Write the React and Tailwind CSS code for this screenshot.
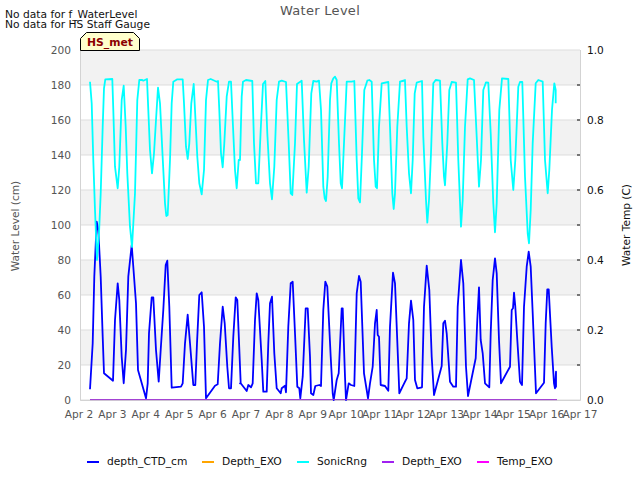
const map = (ox, oy, pts) => {
  const out = [];
  for (let i = 0; i < pts.length; i += 2) out.push(`${(ox + pts[i] / 3).toFixed(1)},${(oy + pts[i + 1] / 3).toFixed(1)}`);
  return out;
};

const sonic = [
  ...map(80, 60, [30,65,35,130,40,300,45,450,51,600,57,520,62,400,68,200,72,85,76,58,97,57,100,150,105,320,113,385,118,320,125,120,131,77,137,200,142,340,150,500,156,561,165,400,172,120,178,60,187,60,190,62,201,57,205,150,210,270,216,340,222,280,228,180,234,83,240,130,247,270,255,430,259,468,263,465,270,300,275,130,280,65,292,58,308,58,312,130,318,260,323,297,328,250,334,130,341,72,345,150,352,290,358,370,365,403,372,330,378,120,384,60,392,57,410,65,414,63,418,150,423,280,428,322,433,250,440,110,447,65,453,65,458,180,465,330,470,385,476,300]),
  ...map(240, 60, [0,300,5,110,9,65,18,60,37,63,42,250,48,370,55,370,62,210,69,72,76,63,82,220,90,370,96,418,103,320,110,120,117,65,125,62,138,66,146,250,152,400,157,405,165,250,171,72,185,62,192,240,200,398,206,320,214,100,220,63,230,65,237,62,243,150,250,380,254,415,258,423,263,350,270,120,274,70,280,55,285,50,290,60,297,250,302,370,306,385,312,250,320,65,335,65,343,63,350,300,355,415,360,427,366,280,373,90,382,62,388,60,395,65,402,300,407,380,411,385,417,200,425,70,445,66,450,200,457,400,461,447,465,400,472,200,480,65,495,60]),
  ...map(400, 60, [0,65,15,62,20,200,27,340,33,400,38,300,44,100,50,68,66,63,70,230,78,420,82,488,87,420,93,280,100,70,107,60,120,62,127,250,132,350,135,376,142,250,148,90,155,66,168,68,175,300,183,500,188,420,195,200,203,58,210,55,222,60,230,230,237,380,243,300,250,90,258,67,265,68,272,220,280,430,285,517,290,430,298,150,306,55,325,57,332,300,340,390,346,300,355,80,360,66,367,66,375,350,383,520,387,550,392,450,398,250,407,70,415,60,428,65,435,300,443,400,448,330,456,150,463,70,467,90,467,130]),
].join(" ");

const depth = [
  ...map(80, 210, [30,538,38,400,43,200,50,35,55,60,62,200,68,380,72,490,99,512,105,330,113,220,118,270,125,440,131,520,138,420,145,200,155,105,160,170,168,280,174,480,198,565,203,520,207,370,215,262,220,262,228,420,236,515,242,420,250,300,257,165,262,152,268,290,275,533,303,530,308,520,315,400,323,314,330,400,340,525,346,525,351,400,358,255,365,247,372,350,378,565,405,527,413,523,420,400,428,290,434,340,442,470,447,535,453,535,460,380,467,262,472,270,482,520]),
  ...map(240, 260, [0,370,2,370,20,393,25,375,33,382,38,370,45,180,50,100,55,120,65,300,70,395,80,395,85,250,90,130,96,110,103,280,110,385,122,400,125,385,135,377,138,397,145,200,152,70,158,65,165,220,172,380,178,385,181,415,188,350,197,145,203,145,210,290,213,400,220,405,226,378,238,375,243,378,250,150,256,65,262,80,272,290,278,400,281,420,290,360,296,340,305,145,308,145,315,350,318,420,326,370,333,375,343,378,350,100,357,48,362,65,372,340,380,390,384,415,390,370,398,320,405,190,410,150,413,225,417,230,422,375,435,378,445,392,450,200,459,38,465,70,475,320,478,400,495,365,500,355]),
  ...map(400, 240, [0,455,20,415,27,250,33,182,40,240,45,420,52,445,66,442,72,200,80,77,88,150,95,350,102,465,125,378,130,250,135,242,140,280,150,425,160,440,168,440,173,200,183,60,190,130,198,380,204,468,227,355,232,240,237,142,242,300,248,340,255,430,268,442,272,280,278,120,285,55,290,100,297,300,303,430,330,380,335,210,339,205,342,158,346,200,352,300,360,425,366,435,372,200,380,80,386,35,392,80,398,220,408,460,432,428,437,250,442,148,446,148,455,320,462,430,465,445,468,395,468,440,464,445]),
].join(" ");

const yTicks = [0, 20, 40, 60, 80, 100, 120, 140, 160, 180, 200];
const bands = [180, 140, 100, 60, 20];
const days = [2, 3, 4, 5, 6, 7, 8, 9, 10, 11, 12, 13, 14, 15, 16, 17];
const rightTicks = [0.1, 0.2, 0.3, 0.4, 0.5, 0.6, 0.7, 0.8, 0.9];
const rightLabels = ["0.0", "0.2", "0.4", "0.6", "0.8", "1.0"];
const legend = [
  ["depth_CTD_cm", "bg-[#0000ff]", "w-[79px]"],
  ["Depth_EXO", "bg-[#ffa500]", "w-[59px]"],
  ["SonicRng", "bg-[#00ffff]", "w-[49px]"],
  ["Depth_EXO", "bg-[#a020f0]", "w-[59px]"],
  ["Temp_EXO", "bg-[#ff00ff]", "w-[55px]"],
];

export default function App() {
  return (
    <div className="w-[640px] h-[480px] bg-white flex flex-col overflow-hidden font-['DejaVu_Sans',sans-serif]">
      <div className="h-[32px] grid grid-cols-[1fr_auto_1fr] shrink-0">
        <div className="pl-[5px] pt-[10px] text-[10.7px] leading-[10px] text-[#111] whitespace-nowrap">
          <div>No data for f_WaterLevel</div>
          <div>No data for HS Staff Gauge</div>
        </div>
        <div className="pt-[3px] text-[13px] leading-[16px] text-[#555] tracking-[0.3px]">Water Level</div>
        <div />
      </div>

      <svg className="block shrink-0" width="640" height="413" viewBox="0 32 640 413">
        <rect x="80" y="50" width="500" height="350" fill="#ffffff" />
        {bands.map((v) => (
          <rect key={v} x="80" y={400 - (v + 20) * 1.75} width="500" height="35" fill="#f2f2f2" />
        ))}
        {yTicks.map((v) => (
          <line key={v} x1="80" x2="580" y1={400 - v * 1.75} y2={400 - v * 1.75} stroke="#dddddd" strokeWidth="1" />
        ))}
        <path d="M80.5 50V400.5H580.5V50" fill="none" stroke="#d3d3d3" strokeWidth="1" />

        <polyline points={depth} fill="none" stroke="#0000ff" strokeWidth="1.8" strokeLinejoin="round" />
        <polyline points={sonic} fill="none" stroke="#00ffff" strokeWidth="1.8" strokeLinejoin="round" />
        <line x1="90" x2="557" y1="399.6" y2="399.6" stroke="#9b30d0" strokeWidth="1" />

        {rightTicks.map((v) => (
          <line key={v} x1="577" x2="580" y1={400 - v * 350} y2={400 - v * 350} stroke="#000" strokeWidth="1" />
        ))}

        <g fontSize="10.6" fill="#555555">
          {yTicks.map((v) => (
            <text key={v} x="71" y={404 - v * 1.75} textAnchor="end">{v}</text>
          ))}
          {days.map((d, i) => (
            <text key={d} x={79 + i * 33.4} y="417.5" textAnchor="middle">{`Apr ${d}`}</text>
          ))}
          <text transform="translate(19 226) rotate(-90)" textAnchor="middle">Water Level (cm)</text>
        </g>
        <g fontSize="10.6" fill="#111111">
          {rightLabels.map((t, i) => (
            <text key={t} x="587" y={403.5 - i * 70}>{t}</text>
          ))}
          <text transform="translate(630 225) rotate(-90)" textAnchor="middle">Water Temp (C)</text>
        </g>

        <path d="M80.5 50.5V38.5L86.5 32.5H133.5L139.5 38.5V50.5Z" fill="#ffffcc" stroke="#000" strokeWidth="1" />
        <text x="110" y="46" textAnchor="middle" fontSize="10.8" fontWeight="700" fill="#8b0000">HS_met</text>
      </svg>

      <div className="flex items-center h-[34px] pl-[87px] text-[10.7px] text-[#111] whitespace-nowrap">
        {legend.map(([label, color, width], i) => (
          <div key={i} className="flex items-center mr-[16px]">
            <span className={`w-[12px] h-[2px] mr-[8px] ${color}`} />
            <span className={width}>{label}</span>
          </div>
        ))}
      </div>
    </div>
  );
}
